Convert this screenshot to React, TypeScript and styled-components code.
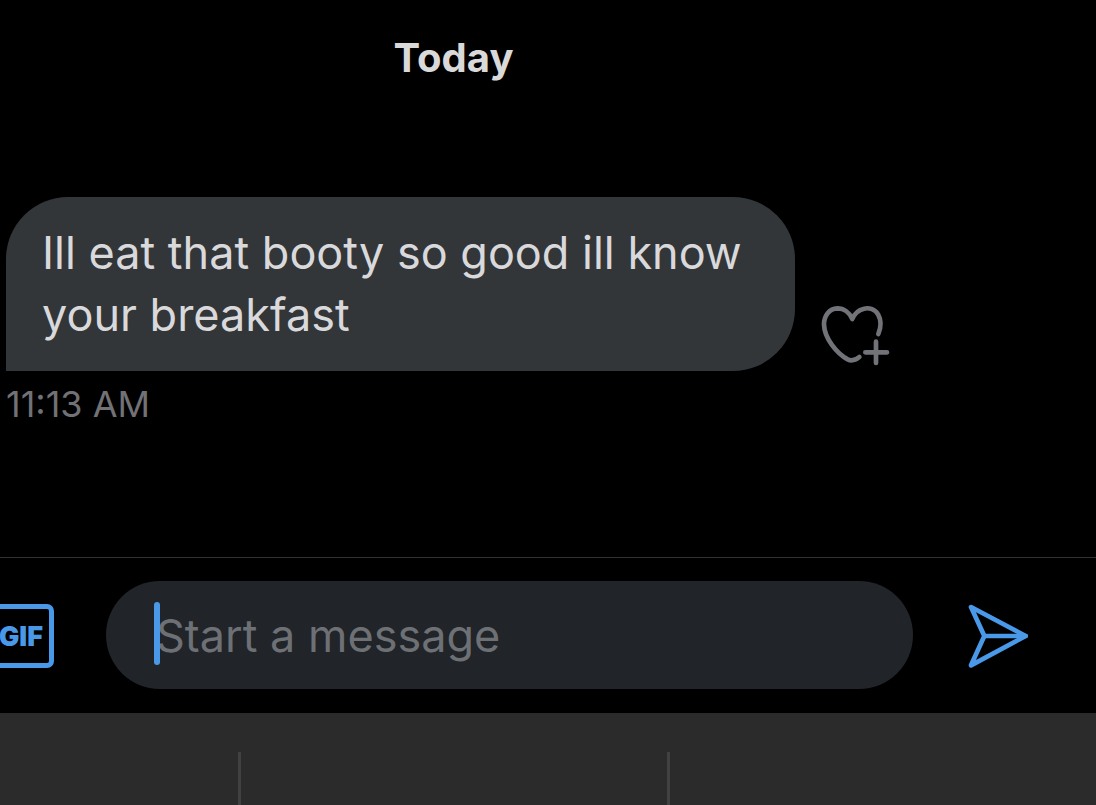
import React from 'react';
import styled, { createGlobalStyle } from 'styled-components';

const GlobalStyle = createGlobalStyle`
  * { box-sizing: border-box; }
  body {
    margin: 0;
    background: #000;
    font-family: Inter, "Liberation Sans", sans-serif;
  }
`;

const Page = styled.div`
  display: flex;
  flex-direction: column;
  min-height: 100vh;
  overflow: hidden;
`;

const Conversation = styled.main`
  flex: 1;
  padding: 32px 195px 0 6px;
`;

const DayHeading = styled.h1`
  margin: 0 0 113px;
  font-size: 40px;
  line-height: 52px;
  font-weight: 700;
  text-align: center;
  color: #d9d9d9;
`;

const MessageRow = styled.div`
  display: flex;
  align-items: flex-end;
  gap: 26px;
  margin-right: 11px;
`;

const Bubble = styled.p`
  flex: 1;
  margin: 0;
  padding: 25px 36px;
  border-radius: 62px 62px 62px 0;
  background: #333639;
  color: #d9d9dc;
  font-size: 45px;
  line-height: 62px;
`;

const IconButton = styled.button<{ $tone: string }>`
  display: flex;
  flex: none;
  padding: 0;
  border: 0;
  background: none;
  color: ${(p) => p.$tone};
  cursor: pointer;
`;

const ReactionSlot = styled.div`
  flex: none;
  padding-bottom: 5px;
`;

const Timestamp = styled.time`
  display: block;
  margin-top: 11px;
  font-size: 36px;
  line-height: 44px;
  color: #717176;
`;

const Composer = styled.form`
  display: flex;
  align-items: center;
  padding: 23px 67px 24px 0;
  border-top: 1px solid #2f3336;
`;

const GifButton = styled.button`
  flex: none;
  width: 64px;
  height: 64px;
  margin: 2px 52px 0 -10px;
  padding: 2px 2px 0 0;
  border: 5px solid #4a99e9;
  border-radius: 7px;
  background: none;
  color: #4a99e9;
  font: 900 27px/52px Inter, sans-serif;
`;

const Field = styled.div`
  position: relative;
  flex: 1;
  margin-right: 55px;
`;

const Caret = styled.span`
  position: absolute;
  top: 21px;
  left: 48px;
  width: 6px;
  height: 63px;
  border-radius: 3px;
  background: #4a99e9;
`;

const MessageInput = styled.input`
  display: block;
  width: 100%;
  height: 108px;
  padding: 0 50px;
  border: 0;
  border-radius: 54px;
  outline: 0;
  background: #212428;
  color: #d9d9dc;
  font: 400 45px/62px Inter, sans-serif;

  &::placeholder {
    color: #6d7074;
    opacity: 1;
  }
`;

const Suggestions = styled.div`
  display: grid;
  grid-template-columns: 241fr 429fr 426fr;
  height: 92px;
  padding-top: 39px;
  background: #2b2b2b;
`;

const Suggestion = styled.div`
  border-right: 3px solid #414141;

  &:last-child {
    border-right: 0;
  }
`;

const HeartPlusIcon = () => (
  <svg width="69" height="62" viewBox="63 41 207 186" fill="none" stroke="currentColor" strokeWidth="14" strokeLinecap="round" strokeLinejoin="round" aria-hidden="true">
    <path d="M235 131C243 111 243 88 235 74C226 57 208 51 192 55C174 59 163 71 157 86C149 67 132 54 112 54C88 55 72 76 72 102C73 145 112 190 143 207C157 214 167 209 178 200" />
    <path d="M228 154V218M196 186H261" />
  </svg>
);

const SendIcon = () => (
  <svg width="61" height="66" viewBox="55 36 183 198" fill="none" stroke="currentColor" strokeWidth="14" strokeLinecap="round" strokeLinejoin="round" aria-hidden="true">
    <path d="M64 51L228 138L64 226L104 138Z" />
    <path d="M104 138H228" />
  </svg>
);

export default function App() {
  return (
    <Page>
      <GlobalStyle />
      <Conversation>
        <DayHeading>Today</DayHeading>
        <MessageRow>
          <Bubble>Ill eat that booty so good ill know your breakfast</Bubble>
          <ReactionSlot>
            <IconButton type="button" $tone="#717378" aria-label="Add reaction">
              <HeartPlusIcon />
            </IconButton>
          </ReactionSlot>
        </MessageRow>
        <Timestamp>11:13 AM</Timestamp>
      </Conversation>
      <Composer onSubmit={(e) => e.preventDefault()}>
        <GifButton type="button">GIF</GifButton>
        <Field>
          <MessageInput type="text" placeholder="Start a message" aria-label="Start a message" />
          <Caret />
        </Field>
        <IconButton type="submit" $tone="#4a99e9" aria-label="Send">
          <SendIcon />
        </IconButton>
      </Composer>
      <Suggestions>
        <Suggestion />
        <Suggestion />
        <Suggestion />
      </Suggestions>
    </Page>
  );
}
